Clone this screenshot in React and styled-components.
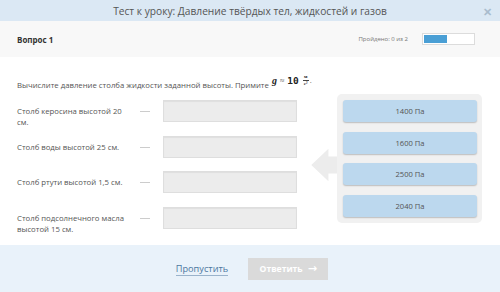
import React from "react";
import styled, { createGlobalStyle } from "styled-components";

const Global = createGlobalStyle`
  html, body { margin: 0; padding: 0; background: #fff; }
  body { font-family: "Open Sans", "Noto Sans", sans-serif; }
`;

const Page = styled.div`
  width: 500px;
  height: 292px;
  display: flex;
  flex-direction: column;
  overflow: hidden;
  color: #555;
`;

const Header = styled.div`
  height: 21px;
  flex: none;
  background: #dbe8f4;
  display: flex;
  align-items: center;
  justify-content: center;
  position: relative;
  font-size: 10.2px;
  color: #555;
`;

const Close = styled.span`
  position: absolute;
  right: 8px;
  top: 4px;
  font-size: 11px;
  color: #a9bccd;
  font-weight: 700;
`;

const QuestionBar = styled.div`
  height: 36px;
  flex: none;
  background: #f8f8f8;
  display: flex;
  align-items: center;
  padding: 0 25px 0 17px;
`;

const QTitle = styled.div`
  font-weight: 700;
  font-size: 8px;
  color: #333;
  flex: 1;
`;

const Passed = styled.div`
  font-size: 6px;
  color: #777;
  margin-right: 14px;
`;

const Progress = styled.div`
  width: 49px;
  height: 8px;
  border: 1px solid #dcdcdc;
  background: #fff;
  padding: 1px;
  display: flex;
`;

const Fill = styled.div`
  background: #4a9fd5;
  height: 100%;
`;

const Body = styled.div`
  flex: 1;
  padding: 16px 17px 0;
`;

const Instruction = styled.div`
  height: 17px;
  display: flex;
  align-items: flex-end;
  font-size: 7.75px;
  color: #555;
  margin-bottom: 4px;
  white-space: nowrap;
`;

const Formula = styled.span`
  font-family: "Liberation Serif", serif;
  color: #222;
  display: inline-flex;
  align-items: center;
  margin-left: 3px;
  position: relative;
  top: -4px;
`;

const G = styled.span`
  font-style: italic;
  font-weight: 700;
  font-size: 10px;
`;

const Approx = styled.span`
  font-size: 8px;
  margin: 0 3px;
  color: #555;
`;

const Ten = styled.span`
  font-weight: 700;
  font-size: 9.5px;
  font-family: "DejaVu Sans Mono", monospace;
  margin-right: 4px;
`;

const Frac = styled.span`
  display: inline-flex;
  flex-direction: column;
  align-items: center;
  font-size: 5px;
  line-height: 5px;
  font-weight: 700;
`;

const FracLine = styled.span`
  width: 6px;
  height: 0;
  border-top: 0.6px solid #444;
  margin: 0.5px 0;
`;

const Content = styled.div`
  display: flex;
  align-items: flex-start;
`;

const Rows = styled.div`
  display: flex;
  flex-direction: column;
  gap: 13.7px;
  margin-top: 6px;
`;

const Row = styled.div`
  display: flex;
  align-items: flex-start;
  height: 22px;
`;

const Label = styled.div`
  width: 112px;
  margin-right: 11px;
  font-size: 7.75px;
  line-height: 11px;
  padding-top: 6px;
  color: #555;
`;

const Dash = styled.div`
  width: 10px;
  height: 1px;
  background: #ccc;
  margin-top: 11px;
  margin-right: 13px;
`;

const Input = styled.div`
  width: 132px;
  height: 20px;
  background: #ececec;
  border: 1px solid #dedede;
  box-shadow: inset 0 1px 1px rgba(0, 0, 0, 0.06);
`;

const ArrowWrap = styled.div`
  width: 40px;
  align-self: center;
  display: flex;
  margin-top: 6px;
`;

const Panel = styled.div`
  width: 134px;
  background: #f1f1f1;
  border-radius: 5px;
  padding: 6px 5px 6px 6px;
  display: flex;
  flex-direction: column;
  gap: 9.7px;
`;

const Option = styled.div`
  height: 22px;
  border-radius: 3px;
  background: #bcd8ee;
  box-shadow: 0 1px 1.5px rgba(0, 0, 0, 0.22);
  display: flex;
  align-items: center;
  justify-content: center;
  font-size: 7.6px;
  color: #555;
`;

const Footer = styled.div`
  height: 47px;
  flex: none;
  background: #e9f2fa;
  display: flex;
  align-items: center;
  justify-content: center;
  gap: 20px;
  padding-left: 4px;
`;

const Skip = styled.span`
  font-size: 9.2px;
  color: #4c77a0;
  border-bottom: 1px solid #9ab3cb;
  line-height: 12px;
  margin-top: 1px;
`;

const Answer = styled.div`
  width: 80px;
  height: 22px;
  background: #dadada;
  color: #fff;
  font-weight: 700;
  font-size: 8.6px;
  display: flex;
  align-items: center;
  justify-content: center;
  gap: 5px;
`;

const ArrowGlyph = styled.span`
  font-size: 11px;
  line-height: 1;
  font-family: "DejaVu Sans", sans-serif;
`;

const rows = [
  "Столб керосина высотой 20 см.",
  "Столб воды высотой 25 см.",
  "Столб ртути высотой 1,5 см.",
  "Столб подсолнечного масла высотой 15 см.",
];

const options = ["1400 Па", "1600 Па", "2500 Па", "2040 Па"];

export default function App() {
  return (
    <Page>
      <Global />
      <Header>
        Тест к уроку: Давление твёрдых тел, жидкостей и газов
        <Close>✕</Close>
      </Header>
      <QuestionBar>
        <QTitle>Вопрос 1</QTitle>
        <Passed>Пройдено: 0 из 2</Passed>
        <Progress>
          <Fill style={{ width: "46%" }} />
        </Progress>
      </QuestionBar>
      <Body>
        <Instruction>
          Вычислите давление столба жидкости заданной высоты. Примите
          <Formula>
            <G>g</G>
            <Approx>≈</Approx>
            <Ten>10</Ten>
            <Frac>
              <span>м</span>
              <FracLine />
              <span>с²</span>
            </Frac>
            <Approx style={{ margin: "0 0 0 1px" }}>.</Approx>
          </Formula>
        </Instruction>
        <Content>
          <Rows>
            {rows.map((r) => (
              <Row key={r}>
                <Label>{r}</Label>
                <Dash />
                <Input />
              </Row>
            ))}
          </Rows>
          <ArrowWrap>
            <svg width="42" height="38" viewBox="0 0 42 38">
              <polygon
                points="15,19 33,2 33,10 42,10 42,28 33,28 33,36"
                fill="#ececec"
              />
            </svg>
          </ArrowWrap>
          <Panel>
            {options.map((o) => (
              <Option key={o}>{o}</Option>
            ))}
          </Panel>
        </Content>
      </Body>
      <Footer>
        <Skip>Пропустить</Skip>
        <Answer>
          Ответить <ArrowGlyph>→</ArrowGlyph>
        </Answer>
      </Footer>
    </Page>
  );
}
